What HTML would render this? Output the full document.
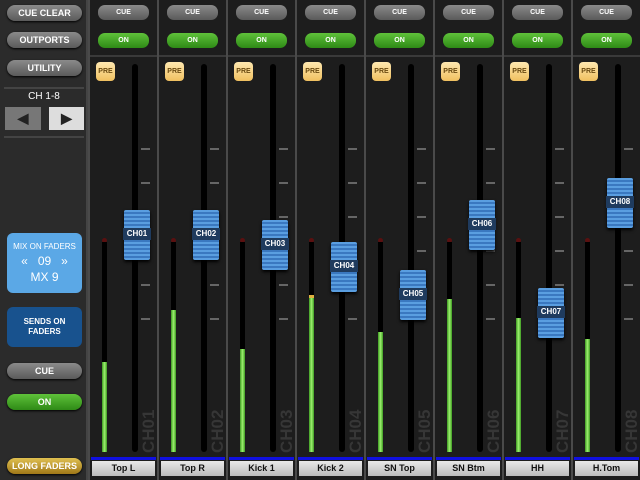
<!DOCTYPE html><html><head><meta charset="utf-8"><style>
*{margin:0;padding:0;box-sizing:border-box}
body{width:640px;height:480px;background:#222;position:relative;overflow:hidden;font-family:"Liberation Sans",sans-serif;font-weight:bold}
.a{position:absolute}
.lp{left:0;top:0;width:88px;height:480px;background:#2b2b2b;border-right:2px solid #444}
.gb{position:absolute;left:7px;width:75px;height:16px;border-radius:8px;background:linear-gradient(#8a8a8a,#5a5a5a);color:#fff;font-size:9px;text-align:center;line-height:16px;box-shadow:0 1px 2px #000}
.gr{background:linear-gradient(#5fc23a,#2e8a16)}
.st{position:absolute;top:0;width:69px;height:480px;background:#1d1d1d;border-left:2px solid #4a4a4a}
.st .cue{position:absolute;left:8px;top:5px;width:51px;height:15px;border-radius:7px;background:linear-gradient(#8a8a8a,#5a5a5a);color:#fff;font-size:7px;text-align:center;line-height:15px}
.st .on{position:absolute;left:8px;top:33px;width:51px;height:15px;border-radius:7px;background:linear-gradient(#5fc23a,#2e8a16);color:#fff;font-size:7px;text-align:center;line-height:15px}
.st .sep{position:absolute;left:0;top:55px;width:67px;height:2px;background:#3a3a3a}
.st .pre{position:absolute;left:6px;top:62px;width:19px;height:19px;border-radius:4px;background:linear-gradient(#ffe8b0,#f0c060);color:#6a4a10;font-size:7px;text-align:center;line-height:19px}
.st .mb{position:absolute;left:12px;top:242px;width:5px;height:210px;background:#000}
.st .dot{position:absolute;left:12px;top:238px;width:5px;height:5px;border-radius:3px;background:#5a1010}
.st .mf{position:absolute;left:12px;width:5px;bottom:28px;background:linear-gradient(90deg,#3c9a20,#9ef070,#3c9a20)}
.st .tr{position:absolute;left:42px;top:64px;width:6px;height:388px;border-radius:3px;background:#000}
.st .tk{position:absolute;left:51px;width:9px;height:2px;background:#666}
.st .vl{position:absolute;left:50px;top:405px;width:18px;height:48px;color:#363636;font-size:17px;writing-mode:vertical-rl;transform:rotate(180deg);line-height:18px;text-align:left}
.st .cap{position:absolute;left:34px;width:26px;height:50px;border-radius:2px;background:repeating-linear-gradient(#5a9ee0 0 2px,#3a78c0 2px 4px);box-shadow:0 2px 3px #000}
.st .cap span{position:absolute;left:-1px;top:18px;width:28px;height:12px;background:#1f3b5e;color:#fff;font-size:8px;text-align:center;line-height:12px}
.st .bl{position:absolute;left:1px;top:457px;width:65px;height:3px;background:#1010e0}
.st .lb{position:absolute;left:2px;top:461px;width:63px;height:15px;background:linear-gradient(#e8e8e8,#bbb);color:#111;font-size:9px;text-align:center;line-height:15px;font-weight:bold}
</style></head><body>
<div class="a lp">
<div class="gb" style="top:5px">CUE CLEAR</div>
<div class="gb" style="top:32px">OUTPORTS</div>
<div class="gb" style="top:60px">UTILITY</div>
<div class="a" style="left:4px;top:87px;width:80px;height:2px;background:#444"></div>
<div class="a" style="left:0;top:91px;width:88px;text-align:center;color:#fff;font-size:10px;font-weight:normal">CH 1-8</div>
<div class="a" style="left:5px;top:107px;width:36px;height:23px;background:#777;color:#222;font-size:14px;text-align:center;line-height:23px">&#9664;</div>
<div class="a" style="left:49px;top:107px;width:35px;height:23px;background:#ddd;color:#222;font-size:14px;text-align:center;line-height:23px">&#9654;</div>
<div class="a" style="left:4px;top:136px;width:80px;height:2px;background:#444"></div>
<div class="a" style="left:7px;top:233px;width:75px;height:60px;border-radius:6px;background:#5ba8e6;color:#fff;text-align:center;font-size:8px;font-weight:normal"><div style="margin-top:9px">MIX ON FADERS</div><div style="font-size:12px;margin-top:3px">« &nbsp; 09 &nbsp; »</div><div style="font-size:12px;margin-top:2px">MX 9</div></div>
<div class="a" style="left:7px;top:307px;width:75px;height:40px;border-radius:6px;background:#18528e;color:#fff;text-align:center;font-size:8px;line-height:10px;padding-top:10px">SENDS ON<br>FADERS</div>
<div class="gb" style="top:363px">CUE</div>
<div class="gb gr" style="top:394px">ON</div>
<div class="gb" style="top:458px;background:linear-gradient(#e0c050,#a07818)">LONG FADERS</div>
</div>

<div class="st" style="left:88px"><div class="cue">CUE</div><div class="on">ON</div><div class="sep"></div><div class="pre">PRE</div><div class="dot"></div><div class="mb"></div><div class="mf" style="top:362px"></div><div class="tr"></div><div class="tk" style="top:148px"></div><div class="tk" style="top:182px"></div><div class="tk" style="top:216px"></div><div class="tk" style="top:250px"></div><div class="tk" style="top:284px"></div><div class="tk" style="top:318px"></div><div class="vl">CH01</div><div class="cap" style="top:210px"><span>CH01</span></div><div class="bl"></div><div class="lb">Top L</div></div>
<div class="st" style="left:157px"><div class="cue">CUE</div><div class="on">ON</div><div class="sep"></div><div class="pre">PRE</div><div class="dot"></div><div class="mb"></div><div class="mf" style="top:310px"></div><div class="tr"></div><div class="tk" style="top:148px"></div><div class="tk" style="top:182px"></div><div class="tk" style="top:216px"></div><div class="tk" style="top:250px"></div><div class="tk" style="top:284px"></div><div class="tk" style="top:318px"></div><div class="vl">CH02</div><div class="cap" style="top:210px"><span>CH02</span></div><div class="bl"></div><div class="lb">Top R</div></div>
<div class="st" style="left:226px"><div class="cue">CUE</div><div class="on">ON</div><div class="sep"></div><div class="pre">PRE</div><div class="dot"></div><div class="mb"></div><div class="mf" style="top:349px"></div><div class="tr"></div><div class="tk" style="top:148px"></div><div class="tk" style="top:182px"></div><div class="tk" style="top:216px"></div><div class="tk" style="top:250px"></div><div class="tk" style="top:284px"></div><div class="tk" style="top:318px"></div><div class="vl">CH03</div><div class="cap" style="top:220px"><span>CH03</span></div><div class="bl"></div><div class="lb">Kick 1</div></div>
<div class="st" style="left:295px"><div class="cue">CUE</div><div class="on">ON</div><div class="sep"></div><div class="pre">PRE</div><div class="dot"></div><div class="mb"></div><div class="mf" style="top:295px;border-top:3px solid #e0b040"></div><div class="tr"></div><div class="tk" style="top:148px"></div><div class="tk" style="top:182px"></div><div class="tk" style="top:216px"></div><div class="tk" style="top:250px"></div><div class="tk" style="top:284px"></div><div class="tk" style="top:318px"></div><div class="vl">CH04</div><div class="cap" style="top:242px"><span>CH04</span></div><div class="bl"></div><div class="lb">Kick 2</div></div>
<div class="st" style="left:364px"><div class="cue">CUE</div><div class="on">ON</div><div class="sep"></div><div class="pre">PRE</div><div class="dot"></div><div class="mb"></div><div class="mf" style="top:332px"></div><div class="tr"></div><div class="tk" style="top:148px"></div><div class="tk" style="top:182px"></div><div class="tk" style="top:216px"></div><div class="tk" style="top:250px"></div><div class="tk" style="top:284px"></div><div class="tk" style="top:318px"></div><div class="vl">CH05</div><div class="cap" style="top:270px"><span>CH05</span></div><div class="bl"></div><div class="lb">SN Top</div></div>
<div class="st" style="left:433px"><div class="cue">CUE</div><div class="on">ON</div><div class="sep"></div><div class="pre">PRE</div><div class="dot"></div><div class="mb"></div><div class="mf" style="top:299px"></div><div class="tr"></div><div class="tk" style="top:148px"></div><div class="tk" style="top:182px"></div><div class="tk" style="top:216px"></div><div class="tk" style="top:250px"></div><div class="tk" style="top:284px"></div><div class="tk" style="top:318px"></div><div class="vl">CH06</div><div class="cap" style="top:200px"><span>CH06</span></div><div class="bl"></div><div class="lb">SN Btm</div></div>
<div class="st" style="left:502px"><div class="cue">CUE</div><div class="on">ON</div><div class="sep"></div><div class="pre">PRE</div><div class="dot"></div><div class="mb"></div><div class="mf" style="top:318px"></div><div class="tr"></div><div class="tk" style="top:148px"></div><div class="tk" style="top:182px"></div><div class="tk" style="top:216px"></div><div class="tk" style="top:250px"></div><div class="tk" style="top:284px"></div><div class="tk" style="top:318px"></div><div class="vl">CH07</div><div class="cap" style="top:288px"><span>CH07</span></div><div class="bl"></div><div class="lb">HH</div></div>
<div class="st" style="left:571px"><div class="cue">CUE</div><div class="on">ON</div><div class="sep"></div><div class="pre">PRE</div><div class="dot"></div><div class="mb"></div><div class="mf" style="top:339px"></div><div class="tr"></div><div class="tk" style="top:148px"></div><div class="tk" style="top:182px"></div><div class="tk" style="top:216px"></div><div class="tk" style="top:250px"></div><div class="tk" style="top:284px"></div><div class="tk" style="top:318px"></div><div class="vl">CH08</div><div class="cap" style="top:178px"><span>CH08</span></div><div class="bl"></div><div class="lb">H.Tom</div></div>
</body></html>
